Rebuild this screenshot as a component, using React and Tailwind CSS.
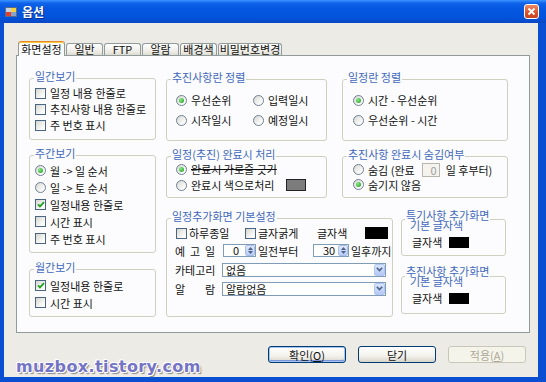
import React from "react";

const FONT = "font-['Noto_Sans_CJK_KR','Noto_Sans',sans-serif]";

function Check({ on }) {
  return (
    <span className="w-[11px] h-[11px] shrink-0 border border-[#4A6584] bg-[linear-gradient(135deg,#d6d6cf,#ffffff_85%)] flex items-center justify-center">
      {on && (
        <svg width="8" height="7" viewBox="0 0 8 7">
          <path d="M1 3.3 L3 5.4 L7 1.2" fill="none" stroke="#21A121" strokeWidth="1.8" />
        </svg>
      )}
    </span>
  );
}

function Radio({ on }) {
  return (
    <span className="w-[11px] h-[11px] shrink-0 rounded-full border border-[#6D7F96] bg-[linear-gradient(135deg,#d8d8d1,#ffffff_85%)] flex items-center justify-center">
      {on && <span className="w-[5px] h-[5px] rounded-full bg-[radial-gradient(circle_at_35%_35%,#86ea86,#1a9a1a)]" />}
    </span>
  );
}

function Item({ radio, on, h = "h-[16px]", gap = "gap-[4px]", children }) {
  return (
    <div className={`flex items-center ${gap} ${h}`}>
      {radio ? <Radio on={on} /> : <Check on={on} />}
      <span className="leading-[12px] whitespace-nowrap">{children}</span>
    </div>
  );
}

function Group({ label, className = "", children }) {
  return (
    <div className={`border border-[#D0D0BF] rounded-[3px] ${className}`}>
      <div className="-mt-[9px] -mb-[3px] ml-[4px] w-fit h-[12px] leading-[12px] px-[1px] bg-[#FCFCFE] text-[#4068C0] whitespace-nowrap">
        {label}
      </div>
      {children}
    </div>
  );
}

function ColorGroup({ title, className = "", top = "-mt-[10px]" }) {
  return (
    <div className={`border border-[#D0D0BF] rounded-[3px] ${className}`}>
      <div className={`${top} ml-[3px] w-fit px-[1px] bg-[#FCFCFE] text-[#4068C0] leading-[10px] whitespace-nowrap`}>
        <div>{title}</div>
        <div className="pl-[4px]">기본 글자색</div>
      </div>
      <div className="flex items-center h-[12px] mt-[6px] pl-[10px]">
        <span className="leading-[12px]">글자색</span>
        <span className="ml-[7px] w-[20px] h-[11px] bg-black" />
      </div>
    </div>
  );
}

function Spin({ value, w }) {
  return (
    <div className={`${w} h-[13px] border border-[#7F9DB9] bg-white flex`}>
      <span className="pl-[9px] leading-[11px]">{value}</span>
      <span className="ml-auto w-[10px] h-[11px] rounded-[2px] border border-[#A9BEEA] bg-[linear-gradient(180deg,#dfe8fd,#b9cbf7)] flex flex-col items-center justify-center gap-[1px]">
        <svg width="5" height="3" viewBox="0 0 5 3"><path d="M0 3 L2.5 0 L5 3Z" fill="#4D6185" /></svg>
        <svg width="5" height="3" viewBox="0 0 5 3"><path d="M0 0 L2.5 3 L5 0Z" fill="#4D6185" /></svg>
      </span>
    </div>
  );
}

function Combo({ value }) {
  return (
    <div className="w-[164px] h-[14px] border border-[#7F9DB9] bg-white flex items-center">
      <span className="pl-[3px] leading-[12px]">{value}</span>
      <span className="ml-auto w-[11px] h-[12px] rounded-[2px] border border-[#B1C6F5] bg-[linear-gradient(180deg,#d9e5fd,#b6c9f6)] flex items-center justify-center">
        <svg width="7" height="5" viewBox="0 0 7 5">
          <path d="M0.8 0.8 L3.5 3.6 L6.2 0.8" fill="none" stroke="#4D6185" strokeWidth="1.6" />
        </svg>
      </span>
    </div>
  );
}

function Tab({ active, w, children }) {
  if (active) {
    return (
      <div className={`${w} h-[15px] -mb-[1px] relative z-10 border border-[#919B9C] border-t-[#E68B2C] border-b-0 rounded-t-[3px] bg-[#FCFCFE] [box-shadow:inset_0_1px_0_#FFC83C] flex items-center justify-center leading-[12px]`}>
        {children}
      </div>
    );
  }
  return (
    <div className={`${w} h-[12px] border border-[#919B9C] border-b-0 rounded-t-[3px] bg-[linear-gradient(180deg,#ffffff,#ecebe6_70%,#dedccf)] flex items-center justify-center leading-[11px]`}>
      {children}
    </div>
  );
}

function Button({ children, def, disabled }) {
  const base = "w-[78px] h-[17px] rounded-[3px] border flex items-center justify-center leading-[12px]";
  if (disabled) {
    return <div className={`${base} border-[#C9C7BA] bg-[#F5F4EA] text-[#ACA899]`}>{children}</div>;
  }
  return (
    <div
      className={`${base} border-[#003C74] bg-[linear-gradient(180deg,#ffffff,#f3f2ec_60%,#d8d4c8)] ${
        def ? "[box-shadow:inset_0_0_0_1px_#A8C3F0,inset_0_-1px_0_1px_#7A97DD]" : ""
      }`}
    >
      {children}
    </div>
  );
}

export default function App() {
  return (
    <div className={`w-[546px] h-[382px] bg-[#0A4FD2] flex flex-col text-[11px] text-[#111] ${FONT}`}>
      {/* title bar */}
      <div className="h-[23px] shrink-0 flex items-center bg-[linear-gradient(180deg,#3c93ff_0%,#0f63ea_14%,#0558e2_35%,#0353dc_75%,#0a47c4_100%)]">
        <svg className="ml-[5px]" width="12" height="12" viewBox="0 0 12 12">
          <rect x="0.5" y="1.5" width="11" height="9" fill="#c6d2e6" stroke="#5b6b88" />
          <rect x="6" y="2" width="5" height="4" fill="#f7d13a" />
          <rect x="1" y="6" width="5" height="4" fill="#e0402d" />
          <rect x="6" y="6" width="5" height="4" fill="#8aa1c8" />
        </svg>
        <span className="ml-[5px] text-[12px] font-bold text-white leading-[14px] [text-shadow:1px_1px_0_#0B2B8F]">옵션</span>
        <div className="ml-auto mr-[7px] w-[15px] h-[15px] rounded-[3px] border border-white bg-[linear-gradient(180deg,#ea8a66,#d9512a_60%,#c84420)] flex items-center justify-center">
          <svg width="9" height="9" viewBox="0 0 9 9">
            <path d="M1.5 1.5 L7.5 7.5 M7.5 1.5 L1.5 7.5" stroke="white" strokeWidth="1.8" />
          </svg>
        </div>
      </div>

      {/* body */}
      <div className="ml-[4px] mr-[8px] h-[354px] bg-[#ECEBE6] flex flex-col">
        <div className="mt-[18px] ml-[14px] h-[14px] flex items-end gap-[1px]">
          <Tab active w="w-[47px]">화면설정</Tab>
          <Tab w="w-[37px]">일반</Tab>
          <Tab w="w-[37px]">FTP</Tab>
          <Tab w="w-[37px]">알람</Tab>
          <Tab w="w-[37px]">배경색</Tab>
          <Tab w="w-[64px]">비밀번호변경</Tab>
        </div>

        {/* panel */}
        <div className="ml-[12px] w-[514px] h-[279px] border border-[#919B9C] bg-[#FCFCFE] flex pt-[22px] pl-[12px]">
          {/* left column */}
          <div className="w-[127px] shrink-0 flex flex-col">
            <Group label="일간보기" className="h-[62px]">
              <div className="pt-[6px] pl-[5px]">
                <Item>일정 내용 한줄로</Item>
                <Item>추진사항 내용 한줄로</Item>
                <Item>주 번호 표시</Item>
              </div>
            </Group>
            <Group label="주간보기" className="h-[98px] mt-[15px]">
              <div className="pt-[6px] pl-[5px]">
                <Item radio on h="h-[17px]">{"월 -> 일 순서"}</Item>
                <Item radio h="h-[17px]">{"일 -> 토 순서"}</Item>
                <Item on h="h-[17px]">일정내용 한줄로</Item>
                <Item h="h-[17px]">시간 표시</Item>
                <Item h="h-[17px]">주 번호 표시</Item>
              </div>
            </Group>
            <Group label="월간보기" className="h-[48px] mt-[16px]">
              <div className="pt-[7px] pl-[5px]">
                <Item on h="h-[17px]">일정내용 한줄로</Item>
                <Item h="h-[17px]">시간 표시</Item>
              </div>
            </Group>
          </div>

          {/* right area */}
          <div className="ml-[10px] mt-[1px] w-[342px] flex flex-col">
            <div className="flex h-[62px]">
              <Group label="추진사항란 정렬" className="w-[161px] h-[62px]">
                <div className="pt-[10px] pl-[9px] grid grid-cols-[77px_auto]">
                  <Item radio on h="h-[20px]">우선순위</Item>
                  <Item radio h="h-[20px]">입력일시</Item>
                  <Item radio h="h-[20px]">시작일시</Item>
                  <Item radio h="h-[20px]">예정일시</Item>
                </div>
              </Group>
              <Group label="일정란 정렬" className="ml-[15px] w-[166px] h-[62px]">
                <div className="pt-[10px] pl-[10px]">
                  <Item radio on h="h-[20px]">시간 - 우선순위</Item>
                  <Item radio h="h-[20px]">우선순위 - 시간</Item>
                </div>
              </Group>
            </div>

            <div className="flex mt-[15px] h-[42px]">
              <Group label="일정(추진) 완료시 처리" className="w-[161px] h-[42px]">
                <div className="pt-[4px] pl-[9px]">
                  <div className="flex items-center gap-[4px] h-[16px]">
                    <Radio on />
                    <span className="leading-[12px] line-through decoration-[#111]">완료시 가로줄 긋기</span>
                  </div>
                  <div className="flex items-center gap-[4px] h-[16px]">
                    <Radio />
                    <span className="leading-[12px]">완료시 색으로처리</span>
                    <span className="ml-auto mr-[20px] w-[20px] h-[12px] bg-[#7C7C7C] border border-[#222]" />
                  </div>
                </div>
              </Group>
              <Group label="추진사항 완료시 숨김여부" className="ml-[15px] w-[166px] h-[42px]">
                <div className="pt-[5px] pl-[10px]">
                  <div className="flex items-center gap-[4px] h-[15px]">
                    <Radio />
                    <span className="leading-[12px]">숨김 (완료</span>
                    <span className="ml-[3px] w-[18px] h-[14px] border border-[#B8B6AA] bg-[#F4F3EE] text-right pr-[2px] text-[#A0A0A0] leading-[12px]">0</span>
                    <span className="ml-[2px] leading-[12px]">일 후부터)</span>
                  </div>
                  <Item radio on h="h-[15px]">숨기지 않음</Item>
                </div>
              </Group>
            </div>

            <div className="flex mt-[20px]">
              <Group label="일정추가화면 기본설정" className="w-[227px] h-[99px]">
                <div className="pt-[6px] pl-[8px]">
                  <div className="flex items-center h-[16px]">
                    <div className="w-[69px] ml-[1px]">
                      <Item gap="gap-[2px]">하루종일</Item>
                    </div>
                    <div className="w-[72px]">
                      <Item gap="gap-[2px]">글자굵게</Item>
                    </div>
                    <span className="w-[48px] leading-[12px]">글자색</span>
                    <span className="w-[23px] h-[12px] bg-black" />
                  </div>
                  <div className="flex items-center h-[19px]">
                    <div className="w-[48px]">
                      <div className="w-[40px] flex justify-between leading-[12px]">
                        <span>예</span>
                        <span>고</span>
                        <span>일</span>
                      </div>
                    </div>
                    <Spin value="0" w="w-[33px]" />
                    <span className="ml-[2px] w-[55px] leading-[12px]">일전부터</span>
                    <Spin value="30" w="w-[36px]" />
                    <span className="ml-[2px] leading-[12px]">일후까지</span>
                  </div>
                  <div className="flex items-center h-[19px]">
                    <span className="w-[47px] leading-[12px]">카테고리</span>
                    <Combo value="없음" />
                  </div>
                  <div className="flex items-center h-[19px]">
                    <div className="w-[47px]">
                      <div className="w-[40px] flex justify-between leading-[12px]">
                        <span>알</span>
                        <span>람</span>
                      </div>
                    </div>
                    <Combo value="알람없음" />
                  </div>
                </div>
              </Group>
              <div className="ml-[8px] mt-[1px] w-[105px] flex flex-col">
                <ColorGroup title="특기사항 추가화면" className="h-[37px]" />
                <ColorGroup title="추진사항 추가화면" className="h-[38px] mt-[20px]" top="-mt-[11px]" />
              </div>
            </div>
          </div>
        </div>

        {/* bottom */}
        <div className="flex items-start h-[44px]">
          <div className="ml-[12px] mt-[26px] font-['DejaVu_Sans',sans-serif] font-bold text-[16px] leading-[16px] tracking-[0.4px] text-[#7474C6] [text-shadow:1px_0_0_#fff,-1px_0_0_#fff,0_1px_0_#fff,0_-1px_0_#fff,1px_1px_0_#fff,-1px_-1px_0_#fff,2px_2px_1px_#8a8a8a]">
            muzbox.tistory.com
          </div>
          <div className="ml-auto mr-[12px] mt-[13px] flex gap-[12px]">
            <Button def>
              확인(<span className="underline">O</span>)
            </Button>
            <Button>닫기</Button>
            <Button disabled>
              적용(<span className="underline">A</span>)
            </Button>
          </div>
        </div>
      </div>
    </div>
  );
}
